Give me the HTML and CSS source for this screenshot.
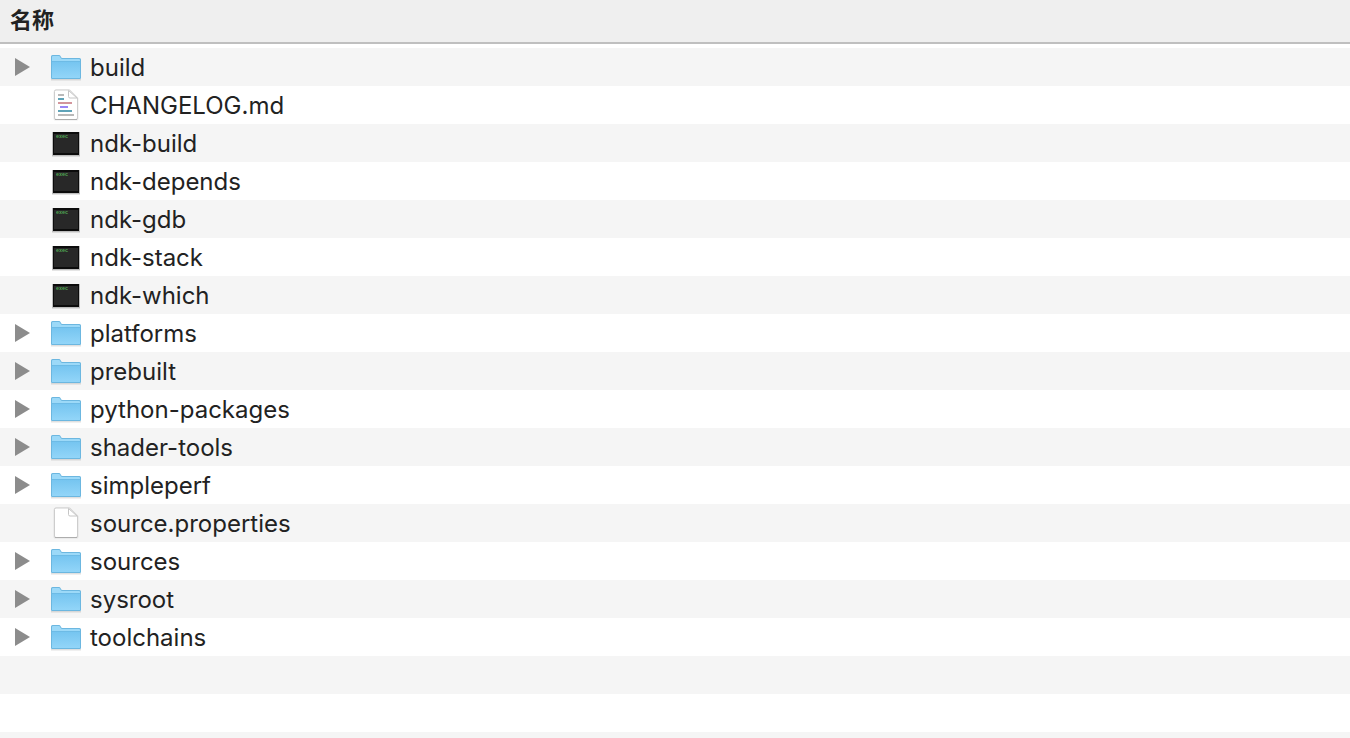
FILE: index.html
```html
<!DOCTYPE html>
<html lang="zh-CN">
<head>
  <meta charset="utf-8">
  <title>名称</title>
  <link rel="stylesheet" href="styles.css">
</head>
<body>
  <!-- shared icons -->
  <svg class="sprites" aria-hidden="true">
    <defs>
      <linearGradient id="folder-front" x1="0" y1="0" x2="0" y2="1">
        <stop offset="0" stop-color="#76c5f0"/>
        <stop offset="1" stop-color="#92d5f8"/>
      </linearGradient>
      <linearGradient id="page-fold" x1="0" y1="1" x2="1" y2="0">
        <stop offset="0" stop-color="#ffffff"/>
        <stop offset=".5" stop-color="#ffffff"/>
        <stop offset="1" stop-color="#d0d0d0"/>
      </linearGradient>
    </defs>
    <symbol id="arrow" viewBox="0 0 16 18">
      <path d="M0 0L15 9L0 18z" fill="#8c8c8c"/>
    </symbol>
    <symbol id="folder" viewBox="0 0 32 32">
      <path d="M1 28h30v1.500H1z" fill="#000" opacity=".12"/>
      <path d="M1 5.500Q1 4 2.500 4H9q1 0 1.500 1l.5 1q.3 1 1.500 1H29.500Q31 7 31 8.500V27q0 1-1 1H2q-1 0-1-1z" fill="#6cb7e0"/>
      <path d="M2 6q0-1 1-1h6q.7 0 1 .8l.7 1.200q.4 1 1.800 1H29q1 0 1 1v2H2z" fill="#9cd9f8"/>
      <path d="M2 11h28v15.500q0 .5-.5.500h-27q-.5 0-.5-.500z" fill="url(#folder-front)"/>
      <path d="M2 10.500h28" stroke="#6dbbe6"/>
    </symbol>
    <symbol id="page" viewBox="0 0 32 32">
      <path d="M3.500 3Q3.500.500 5.500.500H20l8.500 8.500v21q0 1.500-1.500 1.500H5q-1.500 0-1.500-1.500z" fill="#000" opacity=".08"/>
      <path d="M4.500 2.500q0-1.500 1.500-1.500h13.500l8 8v20q0 1.500-1.500 1.500H6q-1.500 0-1.500-1.500z" fill="#fff" stroke="#cdcdcd"/>
      <path d="M5 30.500h22" stroke="#adadad"/>
      <path d="M18.500 1.500v6q0 1.500 1.500 1.500h7z" fill="url(#page-fold)" stroke="#c6c6c6"/>
    </symbol>
    <symbol id="page-text" viewBox="0 0 32 32">
      <use href="#page"/>
      <path d="M8 6h6M8 26h16" stroke="#b9b9b9" stroke-width="2"/>
      <path d="M8 10h6M8 22h14" stroke="#5fa3b8" stroke-width="2"/>
      <path d="M8 14h14" stroke="#d3959c" stroke-width="2"/>
      <path d="M10 18h8" stroke="#9c86f5" stroke-width="2"/>
    </symbol>
    <symbol id="exec" viewBox="0 0 32 32">
      <path d="M2 6h28v24H2z" fill="#000" opacity=".1"/>
      <path d="M2 5h28v24H2z" fill="#bcbcbc"/>
      <path d="M3 5h26v23H3z" fill="#0c0c0c"/>
      <path d="M4 7h24v19H4z" fill="#282828"/>
    </symbol>
  </svg>

  <table class="files">
    <thead>
      <tr><th scope="col">名称</th></tr>
    </thead>
    <tbody>
      <tr><td><div class="item"><button class="toggle" aria-label="build"><svg class="arrow"><use href="#arrow"/></svg></button><svg class="icon"><use href="#folder"/></svg><span class="name">build</span></div></td></tr>
      <tr><td><div class="item"><span class="toggle"></span><svg class="icon"><use href="#page-text"/></svg><span class="name">CHANGELOG.md</span></div></td></tr>
      <tr><td><div class="item"><span class="toggle"></span><svg class="icon"><use href="#exec"/><text x="6" y="11">exec</text></svg><span class="name">ndk-build</span></div></td></tr>
      <tr><td><div class="item"><span class="toggle"></span><svg class="icon"><use href="#exec"/><text x="6" y="11">exec</text></svg><span class="name">ndk-depends</span></div></td></tr>
      <tr><td><div class="item"><span class="toggle"></span><svg class="icon"><use href="#exec"/><text x="6" y="11">exec</text></svg><span class="name">ndk-gdb</span></div></td></tr>
      <tr><td><div class="item"><span class="toggle"></span><svg class="icon"><use href="#exec"/><text x="6" y="11">exec</text></svg><span class="name">ndk-stack</span></div></td></tr>
      <tr><td><div class="item"><span class="toggle"></span><svg class="icon"><use href="#exec"/><text x="6" y="11">exec</text></svg><span class="name">ndk-which</span></div></td></tr>
      <tr><td><div class="item"><button class="toggle" aria-label="platforms"><svg class="arrow"><use href="#arrow"/></svg></button><svg class="icon"><use href="#folder"/></svg><span class="name">platforms</span></div></td></tr>
      <tr><td><div class="item"><button class="toggle" aria-label="prebuilt"><svg class="arrow"><use href="#arrow"/></svg></button><svg class="icon"><use href="#folder"/></svg><span class="name">prebuilt</span></div></td></tr>
      <tr><td><div class="item"><button class="toggle" aria-label="python-packages"><svg class="arrow"><use href="#arrow"/></svg></button><svg class="icon"><use href="#folder"/></svg><span class="name">python-packages</span></div></td></tr>
      <tr><td><div class="item"><button class="toggle" aria-label="shader-tools"><svg class="arrow"><use href="#arrow"/></svg></button><svg class="icon"><use href="#folder"/></svg><span class="name">shader-tools</span></div></td></tr>
      <tr><td><div class="item"><button class="toggle" aria-label="simpleperf"><svg class="arrow"><use href="#arrow"/></svg></button><svg class="icon"><use href="#folder"/></svg><span class="name">simpleperf</span></div></td></tr>
      <tr><td><div class="item"><span class="toggle"></span><svg class="icon"><use href="#page"/></svg><span class="name">source.properties</span></div></td></tr>
      <tr><td><div class="item"><button class="toggle" aria-label="sources"><svg class="arrow"><use href="#arrow"/></svg></button><svg class="icon"><use href="#folder"/></svg><span class="name">sources</span></div></td></tr>
      <tr><td><div class="item"><button class="toggle" aria-label="sysroot"><svg class="arrow"><use href="#arrow"/></svg></button><svg class="icon"><use href="#folder"/></svg><span class="name">sysroot</span></div></td></tr>
      <tr><td><div class="item"><button class="toggle" aria-label="toolchains"><svg class="arrow"><use href="#arrow"/></svg></button><svg class="icon"><use href="#folder"/></svg><span class="name">toolchains</span></div></td></tr>
      <!-- empty rows keep the stripes going -->
      <tr><td></td></tr>
      <tr><td></td></tr>
      <tr><td></td></tr>
    </tbody>
  </table>
</body>
</html>
```

FILE: styles.css
```css
body {
  margin: 0;
  height: 100vh;
  overflow: hidden;
  background: #fff;
  color: #222;
  font: 24px/36px Inter, "Noto Sans CJK SC", sans-serif;
}
.sprites {
  display: block;
  width: 0;
  height: 0;
}
.files {
  width: 100%;
  border-collapse: separate;
  border-spacing: 0;
}
.files th {
  height: 40px;
  padding: 0 10px 2px;
  border-bottom: 2px solid #bfbfbf;
  background: #efefef;
  font-size: 22px;
  line-height: 38px;
  text-align: left;
}
/* small gap under the header */
.files tbody::before {
  content: "";
  display: table-row;
  height: 4px;
}
.files td {
  height: 38px;
  padding: 0;
}
.files tbody tr:nth-child(odd) {
  background: #f5f5f5;
}
.item {
  display: flex;
  align-items: center;
  height: 38px;
  padding-left: 15px;
}
.toggle {
  width: 35px;
  height: 18px;
  padding: 0;
  border: 0;
  background: none;
}
.arrow {
  display: block;
  width: 16px;
  height: 18px;
}
.icon {
  width: 32px;
  height: 32px;
  margin-right: 8px;
}
.icon text {
  font: bold 5px "Liberation Mono", monospace;
  fill: #4fa653;
}
.name {
  padding-top: 2px;
}
```
